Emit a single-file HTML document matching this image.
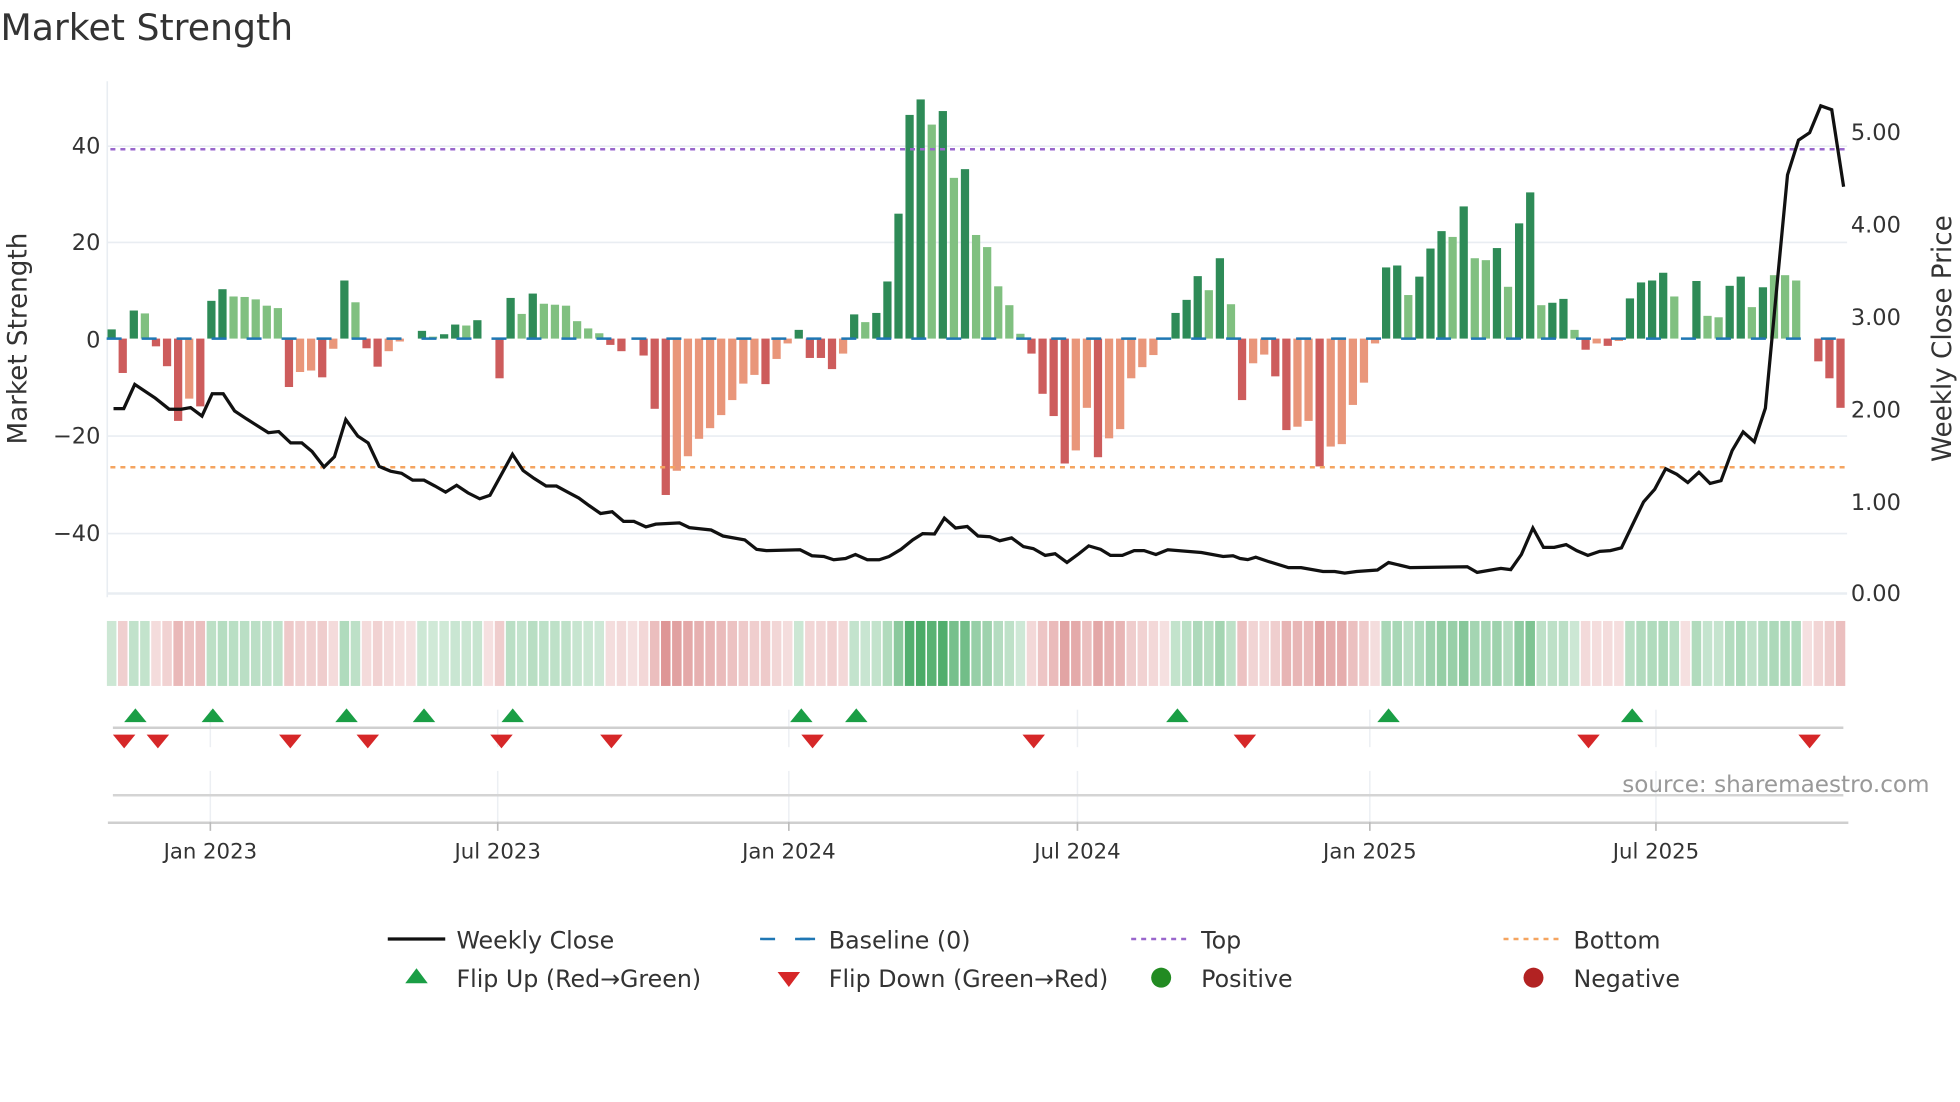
<!DOCTYPE html>
<html><head><meta charset="utf-8">
<style>
html,body{margin:0;padding:0;background:#fff;}
svg{display:block;}
text{font-family:"DejaVu Sans","Liberation Sans",sans-serif;fill:#333;}
</style></head>
<body>
<svg id="s" width="1960" height="1102" viewBox="0 0 1568 882" xmlns="http://www.w3.org/2000/svg">
<rect width="1568" height="882" fill="#fff"/>
<text x="0" y="32" font-size="29">Market Strength</text>
<g stroke="#e9edf2" stroke-width="1.3">
<line x1="85" y1="117" x2="1478" y2="117"/>
<line x1="85" y1="194" x2="1478" y2="194"/>
<line x1="85" y1="349" x2="1478" y2="349"/>
<line x1="85" y1="427" x2="1478" y2="427"/>
<line x1="85" y1="475" x2="1478" y2="475" stroke-width="2"/>
<line x1="85.5" y1="65" x2="85.5" y2="478"/>
</g>
<g id="bars"></g>
<line x1="85" y1="271" x2="1478" y2="271" stroke="#1f77b4" stroke-width="2" stroke-dasharray="12,16"/>
<line x1="88" y1="119.5" x2="1476" y2="119.5" stroke="#9966cc" stroke-width="2" stroke-dasharray="4,4"/>
<line x1="88" y1="374" x2="1476" y2="374" stroke="#f4a460" stroke-width="2" stroke-dasharray="4,4"/>
<polyline id="price" fill="none" stroke="#111" stroke-width="2.6" stroke-linejoin="miter"/>
<g font-size="18" text-anchor="end">
<text x="80" y="123">40</text>
<text x="80" y="200">20</text>
<text x="80" y="278">0</text>
<text x="80" y="355">−20</text>
<text x="80" y="433">−40</text>
</g>
<g font-size="18">
<text x="1481" y="112">5.00</text>
<text x="1481" y="186">4.00</text>
<text x="1481" y="260">3.00</text>
<text x="1481" y="334">2.00</text>
<text x="1481" y="408">1.00</text>
<text x="1481" y="481">0.00</text>
</g>
<text transform="translate(21,271) rotate(-90)" font-size="21" text-anchor="middle">Market Strength</text>
<text transform="translate(1561,271) rotate(-90)" font-size="21" text-anchor="middle">Weekly Close Price</text>
<g id="strip"></g>
<g stroke="#eceff3" stroke-width="1.2">
<line x1="168" y1="568" x2="168" y2="598"/><line x1="398" y1="568" x2="398" y2="598"/>
<line x1="631" y1="568" x2="631" y2="598"/><line x1="862" y1="568" x2="862" y2="598"/>
<line x1="1096" y1="568" x2="1096" y2="598"/><line x1="1325" y1="568" x2="1325" y2="598"/>
<line x1="168" y1="617" x2="168" y2="658"/><line x1="398" y1="617" x2="398" y2="658"/>
<line x1="631" y1="617" x2="631" y2="658"/><line x1="862" y1="617" x2="862" y2="658"/>
<line x1="1096" y1="617" x2="1096" y2="658"/><line x1="1325" y1="617" x2="1325" y2="658"/>
</g>
<line x1="90" y1="582.5" x2="1475" y2="582.5" stroke="#cfcfcf" stroke-width="2"/>
<line x1="90" y1="636.5" x2="1475" y2="636.5" stroke="#d4d4d4" stroke-width="2"/>
<line x1="86" y1="658.5" x2="1479" y2="658.5" stroke="#cfcfcf" stroke-width="2"/>
<g stroke="#bbb" stroke-width="1.3">
<line x1="168" y1="658" x2="168" y2="665"/><line x1="398" y1="658" x2="398" y2="665"/>
<line x1="631" y1="658" x2="631" y2="665"/><line x1="862" y1="658" x2="862" y2="665"/>
<line x1="1096" y1="658" x2="1096" y2="665"/><line x1="1325" y1="658" x2="1325" y2="665"/>
</g>
<g id="flips"></g>
<text x="1544" y="634" font-size="18.5" text-anchor="end" style="fill:#999">source: sharemaestro.com</text>
<g font-size="17" text-anchor="middle">
<text x="168" y="687">Jan 2023</text><text x="398" y="687">Jul 2023</text>
<text x="631" y="687">Jan 2024</text><text x="862" y="687">Jul 2024</text>
<text x="1096" y="687">Jan 2025</text><text x="1325" y="687">Jul 2025</text>
</g>
<g font-size="19">
<line x1="310" y1="751.5" x2="356" y2="751.5" stroke="#111" stroke-width="2.6"/>
<text x="365" y="759">Weekly Close</text>
<line x1="608" y1="751.5" x2="652" y2="751.5" stroke="#1f77b4" stroke-width="2" stroke-dasharray="12,16"/>
<line x1="640" y1="751.5" x2="652" y2="751.5" stroke="#1f77b4" stroke-width="2"/>
<text x="663" y="759">Baseline (0)</text>
<line x1="905" y1="751.5" x2="949" y2="751.5" stroke="#9966cc" stroke-width="2" stroke-dasharray="4,4"/>
<text x="961" y="759">Top</text>
<line x1="1203" y1="751.5" x2="1247" y2="751.5" stroke="#f4a460" stroke-width="2" stroke-dasharray="4,4"/>
<text x="1259" y="759">Bottom</text>
<polygon points="324,787 342,787 333,775" fill="#1a9e45"/>
<text x="365" y="790">Flip Up (Red→Green)</text>
<polygon points="622,778 640,778 631,790" fill="#d62728"/>
<text x="663" y="790">Flip Down (Green→Red)</text>
<circle cx="929" cy="782.5" r="8" fill="#228b22"/>
<text x="961" y="790">Positive</text>
<circle cx="1227" cy="782.5" r="8" fill="#b22222"/>
<text x="1259" y="790">Negative</text>
</g>
</svg>
<script>
var V=[1.9,-7.1,5.8,5.2,-1.6,-5.7,-17,-12.4,-14,7.8,10.2,8.7,8.6,8.1,6.8,6.3,-10,-6.9,-6.6,-8,-2.1,12,7.5,-2,-5.8,-2.6,-0.6,0,1.6,0.4,0.9,2.9,2.7,3.8,0,-8.2,8.4,5.1,9.3,7.2,7,6.8,3.6,2.1,1.1,-1.3,-2.6,0,-3.5,-14.5,-32.3,-27.3,-24.3,-20.7,-18.5,-15.8,-12.7,-9.3,-7.5,-9.4,-4.2,-1,1.8,-4,-4,-6.3,-3.1,5,3.4,5.3,11.8,25.8,46.2,49.4,44.2,47,33.2,35,21.4,18.9,10.8,6.9,1,-3.1,-11.4,-16,-25.8,-23.1,-14.3,-24.5,-20.6,-18.7,-8.2,-5.9,-3.4,0,5.3,8,12.9,10,16.6,7.1,-12.7,-5.1,-3.3,-7.8,-18.9,-18.2,-17,-26.4,-22.3,-21.8,-13.7,-9.1,-1,14.7,15.1,9,12.8,18.6,22.2,21,27.3,16.6,16.2,18.7,10.7,23.8,30.2,6.9,7.4,8.2,1.8,-2.3,-1,-1.5,-0.5,8.3,11.6,12,13.6,8.7,0,11.9,4.7,4.4,10.9,12.8,6.5,10.6,13.1,13.1,12,0,-4.7,-8.2,-14.3];
var D=[1,1,1,0,1,1,1,0,1,1,1,0,0,0,0,0,1,0,0,1,0,1,0,1,1,0,0,0,1,0,1,1,0,1,0,1,1,0,1,0,0,0,0,0,0,1,1,0,1,1,1,0,0,0,0,0,0,0,0,1,0,0,1,1,1,1,0,1,0,1,1,1,1,1,0,1,0,1,0,0,0,0,0,1,1,1,1,0,0,1,0,0,0,0,0,0,1,1,1,0,1,0,1,0,0,1,1,0,0,1,0,0,0,0,0,1,1,0,1,1,1,0,1,0,0,1,0,1,1,0,1,1,0,1,0,1,0,1,1,1,1,0,0,1,0,0,1,1,0,1,0,0,0,0,1,1,1];
var NS="http://www.w3.org/2000/svg";
function el(t,a,p){var e=document.createElementNS(NS,t);for(var k in a)e.setAttribute(k,a[k]);p.appendChild(e);return e;}
var bars=document.getElementById('bars'),strip=document.getElementById('strip');
function mix(c,t){return 'rgb('+c.map(function(v){return Math.round(255+(v-255)*t)}).join(',')+')';}
for(var i=0;i<V.length;i++){
 var x=89+8.87*i, v=V[i], h=v*3.875;
 if(Math.abs(v)>0.05){
  var col = v>0 ? (D[i]?'#2e8b57':'#80c080') : (D[i]?'#cd5c5c':'#e9967a');
  el('rect',{x:(x-3.3).toFixed(2),y:(v>0?271-h:271).toFixed(2),width:6.6,height:Math.abs(h).toFixed(2),fill:col},bars);
 }
 var fc = v>0.05 ? mix([46,158,79],0.22+0.65*Math.min(v/50,1)) : mix([200,80,80],0.18+0.42*Math.min(Math.abs(v)/32,1));
 el('rect',{x:(x-3.8).toFixed(2),y:497,width:7.6,height:52,fill:fc},strip);
}
var P="90.5,327 98.7,327 107.5,307.7 124,318.7 135,327.5 144.7,327.5 152.2,326.2 161.3,333 169.5,315.1 178.3,315.1 187.4,328.9 197,335.3 214.4,346.3 222.7,345.4 232.3,354.5 241.2,354.5 249.4,361.4 259,373.8 267.3,365.6 276.4,335.8 286,349 294.3,354.5 303.1,373.3 312.2,377.1 321,378.8 329.9,384.3 339,384.3 347.8,389 356.3,393.9 365.1,388.4 374.2,394.5 383.6,399.2 391.8,396.4 409.8,363.6 418.3,376.6 427.1,382.9 436.7,389 445,389 454.1,393.9 462.9,398.6 471.2,404.7 480.3,411 489.6,409.6 498.7,417.3 507,417.3 516.6,421.7 524.5,419.5 543.5,418.5 551.4,422.3 568.8,424.2 578.3,429 595.7,432.1 605.2,439.7 613.1,440.7 640,440 649.5,444.8 659,445.4 666.9,448 676.4,447 684.3,443.8 693.8,448 703.3,448 711.2,445.4 720.7,439.7 730.2,432.1 738.1,427.1 747.6,427.4 755.5,414.7 764.4,422.6 773.8,421.4 782.4,429 791.9,429.6 799.8,432.8 809.3,430.5 818.8,437.5 826.7,439.1 836.2,444.5 844.1,443.2 853.6,450.2 863.1,443.2 871,436.9 880.5,439.7 888.4,444.5 897.9,444.5 907.4,440.7 915.3,440.7 924.8,443.8 934.3,440 961.2,442.2 978.6,445.4 986.5,444.8 992.2,447 998.3,447.9 1004.7,446 1014.2,449.2 1030.9,454.3 1041,454.3 1058.5,457.4 1067.9,457.4 1075.9,458.7 1085.4,457.4 1102.1,456.2 1111,450.2 1120.2,452.4 1128.1,454.3 1174,453.6 1181.9,458.1 1191.4,456.5 1200.9,454.9 1208.8,455.9 1217.3,443.8 1226.5,422.6 1235,438.1 1243.6,438.1 1253.1,435.9 1261.6,440.7 1270.5,444.5 1280,441.3 1288.5,440.7 1297.4,438.5 1306.2,420.1 1315.1,401.7 1324,391.6 1332.8,375.2 1341.7,379.6 1350.5,386.2 1359.4,378 1368.3,386.9 1377.1,384.7 1386,360.6 1394.8,345.7 1403.7,353.6 1412.6,326.7 1421.4,233.4 1430.3,140 1439.1,112.2 1448,106.2 1456.9,84.7 1465.7,87.8 1475.2,149.5";
document.getElementById('price').setAttribute('points',P);
var fl=document.getElementById('flips');
[108,170,277,339,410,641,685,942,1111,1306].forEach(function(x){el('polygon',{points:(x-9)+',578 '+(x+9)+',578 '+x+',567',fill:'#1a9e45'},fl);});
[99,126,232,294,401,489,650,827,996,1271,1448].forEach(function(x){el('polygon',{points:(x-9)+',588 '+(x+9)+',588 '+x+',599',fill:'#d62728'},fl);});
</script>
</body></html>
